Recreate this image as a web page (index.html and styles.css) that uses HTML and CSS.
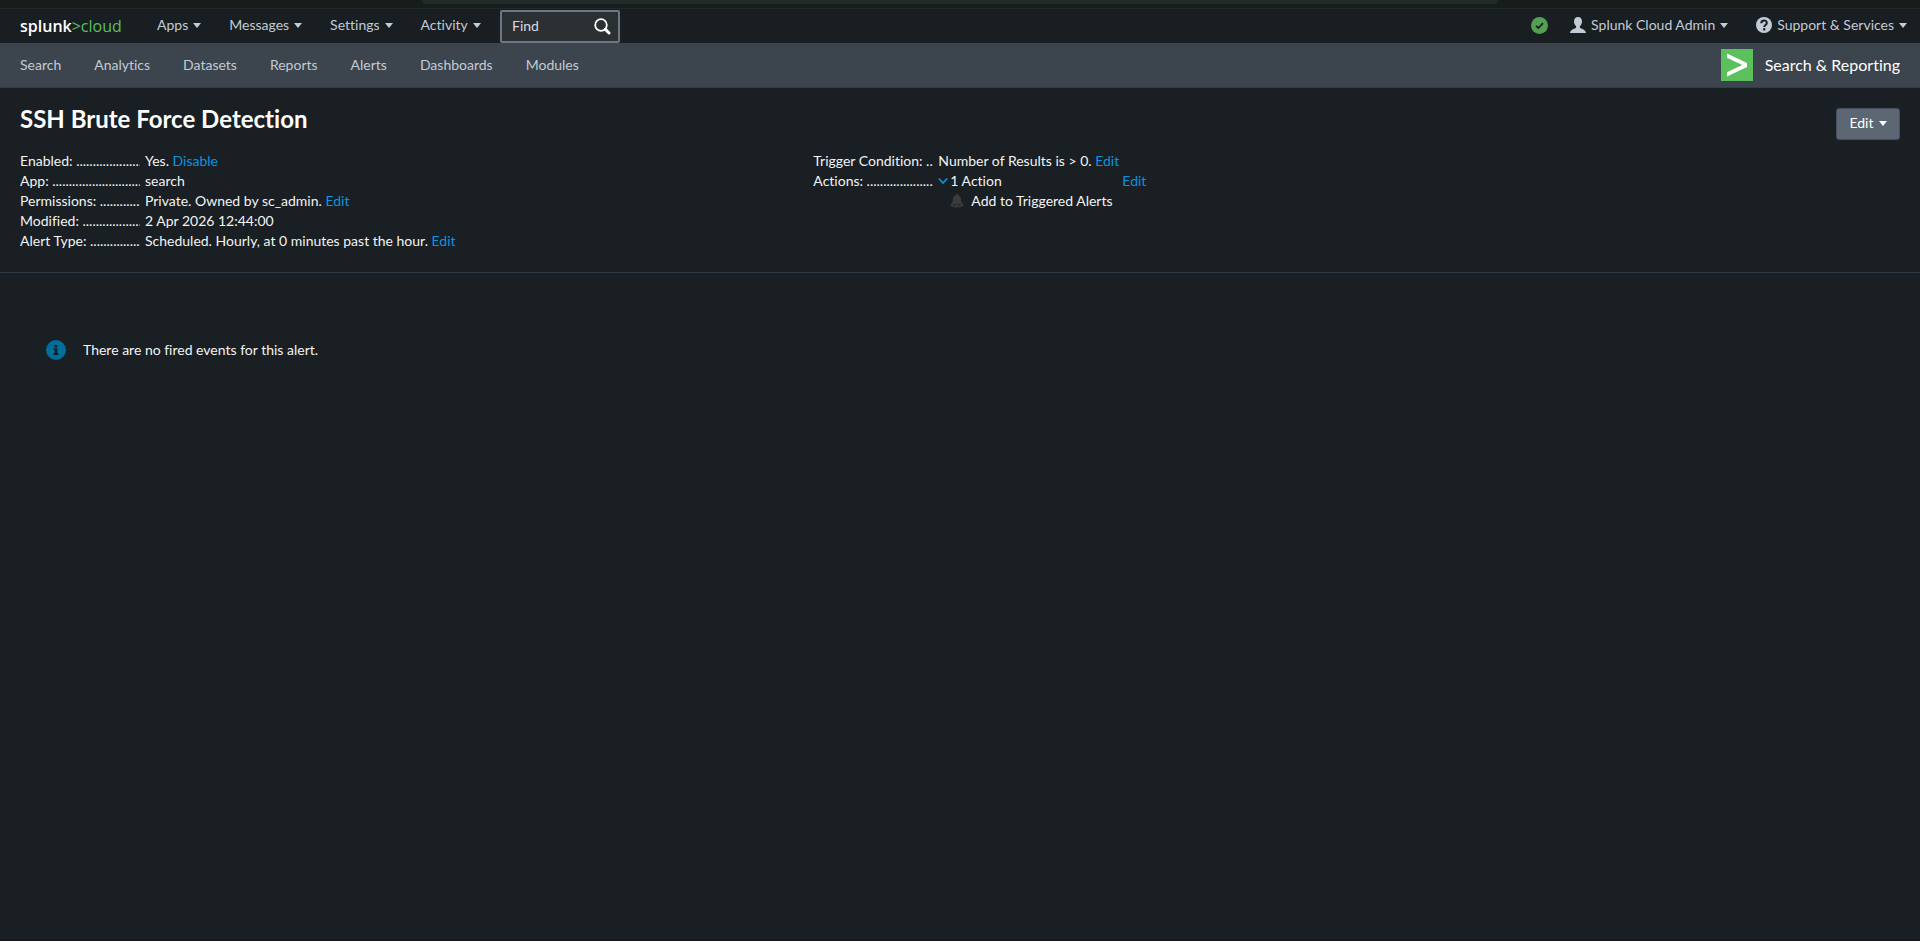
FILE: index.html
```html
<!DOCTYPE html>
<html lang="en">
<head>
  <meta charset="UTF-8">
  <meta name="viewport" content="width=device-width, initial-scale=1.0">
  <title>SSH Brute Force Detection | Splunk</title>
  <link rel="stylesheet" href="styles.css">
</head>
<body>
  <div class="browser-edge"><div class="address-bar"></div></div>
  <header>
    <nav class="navbar">
      <a class="brand" href="#">splunk<span>&gt;cloud</span></a>
      <div class="menus">
        <button class="menu">Apps<i class="caret"></i></button>
        <button class="menu">Messages<i class="caret"></i></button>
        <button class="menu">Settings<i class="caret"></i></button>
        <button class="menu">Activity<i class="caret"></i></button>
      </div>
      <div class="find">
        <input type="text" placeholder="Find" aria-label="Find">
        <svg width="17" height="17" viewBox="0 0 17 17">
          <circle cx="7" cy="7" r="5.8" fill="none" stroke="#fff" stroke-width="1.8"/>
          <path d="M11.4 11.4L15 15" stroke="#fff" stroke-width="3" stroke-linecap="round"/>
        </svg>
      </div>
      <div class="account">
        <svg class="health" width="17" height="17" viewBox="0 0 17 17">
          <circle cx="8.5" cy="8.5" r="8.5" fill="#53a051"/>
          <path d="M5 8.8L7.4 11L12 6.2" fill="none" stroke="#171d21" stroke-width="1.7"/>
        </svg>
        <button class="menu admin">
          <svg width="16" height="16" viewBox="0 0 16 16">
            <path d="M8 0C5.400 0 4 1.900 4 4.500C4 6.500 4.900 8.200 6.100 9.200V10.700C5.500 11.500 0.300 12.200 0 16H16C15.700 12.200 10.500 11.500 9.900 10.700V9.200C11.100 8.200 12 6.500 12 4.500C12 1.900 10.600 0 8 0Z" fill="#c3cbd4"/>
          </svg>
          Splunk Cloud Admin<i class="caret"></i>
        </button>
        <button class="menu support">
          <svg width="16" height="16" viewBox="0 0 16 16">
            <circle cx="8" cy="8" r="8" fill="#c3cbd4"/>
            <path d="M5.300 6.200C5.300 2.600 10.800 2.600 10.800 6C10.800 7.900 8.200 8 8.200 10" fill="none" stroke="#171d21" stroke-width="2"/>
            <rect x="7.100" y="11.200" width="2.200" height="2.200" fill="#171d21"/>
          </svg>
          Support &amp; Services<i class="caret"></i>
        </button>
      </div>
    </nav>
    <nav class="appbar">
      <a href="#">Search</a>
      <a href="#">Analytics</a>
      <a href="#">Datasets</a>
      <a href="#">Reports</a>
      <a href="#">Alerts</a>
      <a href="#">Dashboards</a>
      <a href="#">Modules</a>
      <a class="app-name" href="#">
        <svg width="32" height="32" viewBox="0 0 32 32">
          <rect width="32" height="32" fill="#5cc05c"/>
          <path d="M6 4.500L26 14V18L6 27.500V23.300L21.300 16L6 8.700Z" fill="#fff"/>
        </svg>
        Search &amp; Reporting
      </a>
    </nav>
  </header>
  <main>
    <section class="alert-header">
      <div class="title-row">
        <h1>SSH Brute Force Detection</h1>
        <button class="edit-btn">Edit<i class="caret"></i></button>
      </div>
      <div class="details">
        <dl>
          <dt>Enabled:</dt>
          <dd>Yes. <a href="#">Disable</a></dd>
          <dt>App:</dt>
          <dd>search</dd>
          <dt>Permissions:</dt>
          <dd>Private. Owned by sc_admin. <a href="#">Edit</a></dd>
          <dt>Modified:</dt>
          <dd>2 Apr 2026 12:44:00</dd>
          <dt>Alert Type:</dt>
          <dd>Scheduled. Hourly, at 0 minutes past the hour. <a href="#">Edit</a></dd>
        </dl>
        <dl>
          <dt>Trigger Condition:</dt>
          <dd>Number of Results is &gt; 0. <a href="#">Edit</a></dd>
          <dt>Actions:</dt>
          <dd>
            <div class="actions">
              <svg width="10" height="8" viewBox="0 0 10 8">
                <path d="M0.800 1.500L5 6L9.200 1.500" fill="none" stroke="#0a94e0" stroke-width="1.700"/>
              </svg>
              <span>1 Action</span>
              <a href="#">Edit</a>
            </div>
            <div class="action-item">
              <svg width="14" height="14" viewBox="0 0 14 14">
                <path d="M7 0C7.800 0 8.200 0.500 8.200 1.200C10.400 1.900 11 3.800 11.100 6C11.200 8.300 12 9.200 13.500 10.500C14 12.500 10.500 13.500 7 13.500C3.500 13.500 0 12.500 0.500 10.500C2 9.200 2.800 8.300 2.900 6C3 3.800 3.600 1.900 5.800 1.200C5.800 0.500 6.200 0 7 0Z" fill="#3b3b3b"/>
                <path d="M2.500 10.800C4.500 9.500 9.500 9.500 11.500 10.800C9.500 12.600 4.500 12.600 2.500 10.800Z" fill="#23272a"/>
                <circle cx="7" cy="11.300" r="1.300" fill="#3b3b3b"/>
              </svg>
              <span>Add to Triggered Alerts</span>
            </div>
          </dd>
        </dl>
      </div>
    </section>
    <div class="message">
      <svg width="20" height="20" viewBox="0 0 20 20">
        <circle cx="10" cy="10" r="10" fill="#006d9c"/>
        <rect x="8.500" y="5" width="2.800" height="2.400" fill="#171d21"/>
        <path d="M7.500 8.500H11.300V13.500H12.500V15H7.500V13.500H8.700V10H7.500Z" fill="#171d21"/>
      </svg>
      <span>There are no fired events for this alert.</span>
    </div>
  </main>
</body>
</html>
```

FILE: styles.css
```css
*{
  box-sizing: border-box;
}
body{
  margin: 0;
  min-height: 100vh;
  background-color: #191f22;
  border-bottom: 2px solid #17171f;
  color: #f2f4f5;
  font-family: Lato, "Liberation Sans", sans-serif;
  font-size: 14px;
  font-variant-ligatures: none;
  line-height: 20px;
}
a{
  color: #0a94e0;
  text-decoration: none;
}
svg{
  flex: none;
}
button,
input{
  font: inherit;
}
.browser-edge{
  height: 8px;
  background-color: #171d1a;
}
.address-bar{
  width: 56%;
  height: 4px;
  margin: 0 auto;
  border-radius: 0 0 6px 6px;
  background-color: #202b28;
}
.navbar{
  display: flex;
  align-items: center;
  height: 35px;
  padding: 0 13px 0 20px;
  border-top: 1px solid #23282c;
  background-color: #181e22;
}
.brand{
  width: 137px;
  color: #fff;
  font-family: "Open Sans", sans-serif;
  font-size: 16px;
  font-weight: 600;
}
.brand span{
  color: #5cc05c;
  font-weight: 400;
}
.menus{
  display: flex;
  gap: 28px;
  width: 343px;
  padding-bottom: 2px;
}
.menu{
  display: flex;
  align-items: center;
  padding: 0;
  border: none;
  background: none;
  color: #c3cbd4;
  white-space: nowrap;
  cursor: pointer;
}
.menu svg{
  margin-right: 5px;
}
.caret{
  margin-left: 5px;
  border-top: 5px solid currentColor;
  border-right: 4px solid transparent;
  border-left: 4px solid transparent;
}
.find{
  display: flex;
  align-items: center;
  width: 120px;
  height: 33px;
  padding: 0 7px 0 10px;
  border: 2px solid #6b7785;
  border-radius: 2px;
  background-color: #2b3033;
}
.find input{
  flex: 1;
  min-width: 0;
  padding: 0;
  border: none;
  outline: none;
  background: none;
  color: #fff;
}
.find input::placeholder{
  color: #d5dae0;
  opacity: 1;
}
.account{
  display: flex;
  align-items: center;
  margin-left: auto;
  padding-bottom: 2px;
}
.health{
  margin-right: 22px;
}
.admin{
  margin-right: 28px;
}
.appbar{
  display: flex;
  align-items: center;
  gap: 33px;
  height: 45px;
  padding: 0 20px;
  border-bottom: 1px solid #363c44;
  background-color: #3c444d;
}
.appbar a{
  color: #c3cbd4;
}
.appbar .app-name{
  display: flex;
  align-items: center;
  gap: 12px;
  margin-left: auto;
  color: #fff;
  font-size: 16px;
}
.alert-header{
  padding: 16px 20px 21px;
  border-bottom: 1px solid #2b3a44;
}
.title-row{
  display: flex;
  justify-content: space-between;
  align-items: flex-start;
  height: 47px;
}
h1{
  margin: 0;
  color: #fff;
  font-size: 24px;
  font-weight: 700;
  line-height: 30px;
}
.edit-btn{
  display: flex;
  align-items: center;
  justify-content: center;
  width: 64px;
  height: 32px;
  margin-top: 4px;
  padding: 0 0 2px;
  border: 1px solid #42505e;
  border-radius: 3px;
  background-color: #5c6773;
  color: #fff;
  cursor: pointer;
}
.details{
  display: grid;
  grid-template-columns: 42.2% 1fr;
}
dl{
  display: grid;
  grid-template-columns: 120px 1fr;
  column-gap: 5px;
  align-content: start;
  margin: 0;
}
dt{
  height: 20px;
  overflow: hidden;
  white-space: nowrap;
}
dt::after{
  content: " ........................................";
}
dd{
  margin: 0;
}
.actions{
  display: flex;
  align-items: center;
  gap: 2px;
  width: 208px;
}
.actions a{
  margin-left: auto;
}
.action-item{
  display: flex;
  align-items: center;
  gap: 7px;
  padding-left: 12px;
}
.message{
  display: flex;
  align-items: center;
  gap: 17px;
  padding: 67px 46px;
}
```
